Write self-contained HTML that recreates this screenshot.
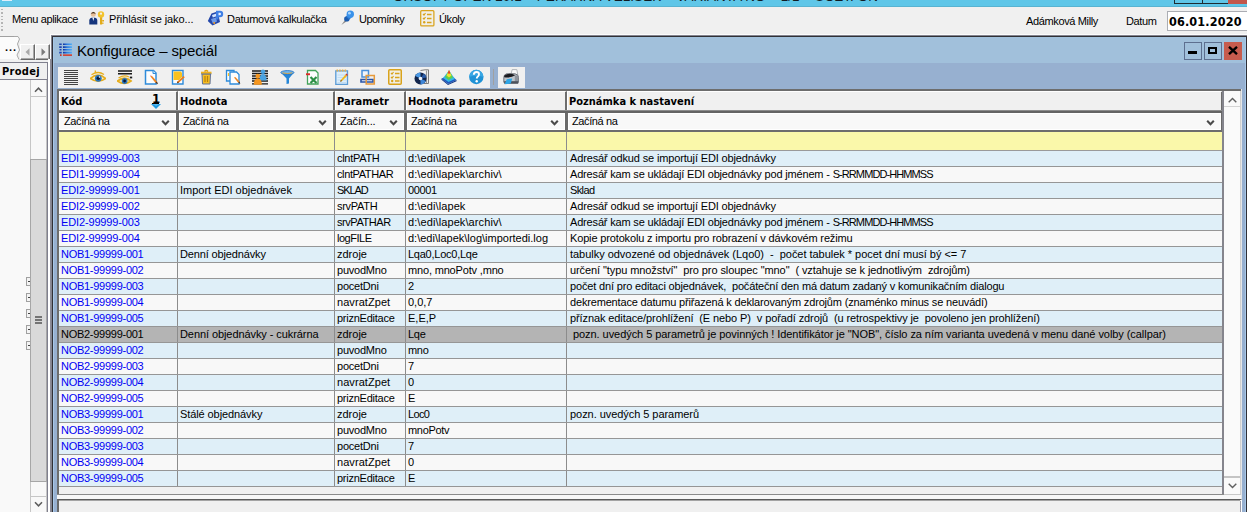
<!DOCTYPE html>
<html lang="cs"><head><meta charset="utf-8"><title>Konfigurace – speciál</title>
<style>
*{box-sizing:border-box;margin:0;padding:0}
html,body{width:1247px;height:512px;overflow:hidden;background:#f0f0f0}
body{position:relative;font-family:"Liberation Sans",sans-serif;font-size:11px;color:#000;line-height:13px}
div,span,svg{position:absolute}
.t{white-space:pre}
.b{font-weight:bold;font-family:"DejaVu Sans Condensed","Liberation Sans",sans-serif}
/* top OS title bar */
#osbar{left:0;top:0;width:1247px;height:7px;background:#5fc6e8;border-bottom:1px solid #58b3d1;overflow:hidden}
#osbar .cap{left:393px;top:-11px;font-size:13.5px;line-height:15px;letter-spacing:.04px;color:#101c24}
#osbar .wb{top:-2px;height:6px;border:1px solid #1e2a30}
/* menu bar */
.grip{left:1px;top:8px;width:2px;height:23px;background:repeating-linear-gradient(#f0f0f0 0,#f0f0f0 .7px,#b4b4b4 .7px,#b4b4b4 2.200px,#f0f0f0 2.200px,#f0f0f0 3.400px)}
.m{top:13px;font-size:11px;line-height:13px;white-space:pre}
/* MDI window */
#wb1{left:51px;top:35px;width:1196px;height:477px;background:#84848f}
#wb2{left:52px;top:36px;width:1195px;height:476px;background:#303036}
#wbg{left:53px;top:37px;width:1194px;height:475px;background:#97b0d0}
#wtitle{left:53px;top:37px;width:1194px;height:26px;background:#a1c0db}
#wcap{left:77px;top:42px;font-size:15px;line-height:18px;white-space:pre;letter-spacing:-.16px}
.wbtn{top:42px;width:18px;height:18px;border:1px solid #5d6f8f}
#tb1{left:58px;top:67px;width:432px;height:21px;background:#f0f0f0}
#tb2{left:498px;top:67px;width:27px;height:21px;background:#f0f0f0}
.ic{top:69px;width:16px;height:16px}
/* grid */
#gframe{left:57px;top:89px;width:1185px;height:406px;background:#f0f0f0;border-left:2px solid #6d6d6d;border-top:2px solid #6d6d6d}
.hc{top:91px;height:19px;background:#f0f0f0;border-top:1px solid #fff;border-left:1px solid #fff;border-right:2px solid #6d6d6d}
.ht{top:95px;font-weight:bold;white-space:pre;font-family:"DejaVu Sans Condensed","Liberation Sans",sans-serif}
.fc{top:113px;height:17px;background:#f8f8f8;border-right:3px solid #6a6a6a;box-shadow:inset 0 0 0 1px #fff}
.ft{top:115px;white-space:pre;letter-spacing:-.38px}
.yc{top:132px;height:18px;background:#faf8aa;border-right:1px solid #8c8c8c}
.hl{left:59px;width:1164px;height:2px;background:#6d6d6d}
.r{left:59px;width:1163px;height:16px;border-bottom:1px solid #969696}
.r.a{background:#dfeff8}.r.w{background:#f8f8f8}.r.sel{background:#b4b4b4}
.r.a .c0,.r.w .c0{color:#0000f4}
.c{top:0;height:15px;line-height:15px;white-space:pre;overflow:hidden;padding-left:2px;border-right:1px solid #8c8c8c}
.c0{left:0;width:119px;padding-left:2px}.c1{left:119px;width:157px}.c2{left:276px;width:71px}.c3{left:347px;width:161px}.c4{left:508px;width:655px;border-right:0;padding-left:3px}
.chev{width:9px;height:6px}
em{font-style:normal}
</style></head><body>
<!-- OS title bar (cropped) -->
<div id="osbar"><span class="t cap">ORSOFT OPEN 20.1 – PEKÁRNA VELÍŠEK – VARIANTA NO – 1/1 – ÚČET: ON</span>
<div style="left:2px;top:-7px;width:10px;height:8px;background:#4a86c8;border:1px solid #dfeefa"></div>
<div class="wb" style="left:1174px;width:29px"></div><div class="wb" style="left:1202px;width:27px"></div><div class="wb" style="left:1228px;width:20px;background:#c2574b;border-color:#c2574b"></div></div>
<!-- menu bar -->
<div class="grip"></div>
<span class="m" style="left:12px;letter-spacing:-.38px">Menu aplikace</span>
<svg style="left:89px;top:11px" width="16" height="14" viewBox="0 0 16 14"><circle cx="4.300" cy="3.300" r="2.500" fill="#e8c09a"/><path d="M1.800 2.800Q4.300-.8 6.800 2.800Q4.300 1.500 1.800 2.800Z" fill="#3a2a1c"/><path d="M.3 13.500V9.500Q.3 6.500 4.300 6.500Q8.300 6.500 8.300 9.500V13.500Z" fill="#15357c"/><path d="M3.300 6.500L4.300 10L5.300 6.500Z" fill="#fff"/><circle cx="12" cy="3.500" r="3.200" fill="#f3c32c"/><circle cx="12" cy="2.700" r="1.100" fill="#f0f0f0"/><path d="M11 6.300H13.200V13.500H11Z" fill="#e2ab1a"/><path d="M13.200 9H15V10.500H13.200ZM13.200 11.500H14.500V13H13.200Z" fill="#e2ab1a"/></svg>
<span class="m" style="left:109px;letter-spacing:-.09px">Přihlásit se jako...</span>
<svg style="left:207px;top:10px" width="17" height="16" viewBox="0 0 17 16"><path d="M4.500 3.500L10.500 1.500L13 12L5.500 15.500L.8 11Z" fill="#2347aa"/><path d="M5 5L9.500 3.500L10.300 6L5.800 7.500Z" fill="#d4e6ff"/><path d="M4 9L9 7.500L10 11.500L5.800 13.500Z" fill="#6f9ae6"/><circle cx="7.200" cy="13" r="1" fill="#f39a1f"/><path d="M9 .8H13Q16.200 .8 16.200 4Q16.200 7.200 13 7.200H11.500V9.500H9Z" fill="#3f7fe4"/><path d="M11.500 2.800H12.700Q14 2.800 14 4Q14 5.200 12.700 5.200H11.500Z" fill="#e4efff"/></svg>
<span class="m" style="left:227px;letter-spacing:-.26px">Datumová kalkulačka</span>
<svg style="left:340px;top:10px" width="16" height="16" viewBox="0 0 16 16"><path d="M1.300 15L5.300 9.800L6.700 11.200Z" fill="#8a8a8a"/><circle cx="6.800" cy="8.900" r="2.700" fill="#1d5cae"/><path d="M5.800 6.500L9.200 9.800L11.500 7.500L8.200 4.200Z" fill="#2a78d0"/><circle cx="10.300" cy="4.300" r="3.700" fill="#3a92ea"/><circle cx="9.400" cy="3.200" r="1.400" fill="#a6d4ff"/></svg>
<span class="m" style="left:359px;letter-spacing:-.54px">Upomínky</span>
<svg style="left:420px;top:10px" width="15" height="17" viewBox="0 0 15 17"><rect x=".7" y=".7" width="13.200" height="15.200" rx="1" fill="#f1efe8" stroke="#d9a31c" stroke-width="1.250"/><path d="M3 4L4 5L5.500 3M3 8L4 9L5.500 7" stroke="#d9a31c" stroke-width="1.200" fill="none"/><circle cx="4.200" cy="12.300" r="1.200" fill="#d9a31c"/><path d="M7 4.500H11.500M7 8.500H11.500M7 12.500H11.500" stroke="#d9a31c" stroke-width="1.600"/></svg>
<span class="m" style="left:439px;letter-spacing:-.4px">Úkoly</span>
<span class="m" style="left:1026px;top:15px;letter-spacing:-.36px">Adámková Milly</span>
<span class="m" style="left:1126px;top:15px;letter-spacing:-.36px">Datum</span>
<div style="left:1167px;top:11px;width:84px;height:20px;background:#fff;border:1px solid #abadb3"></div>
<span class="t b" style="left:1169px;top:13px;font-size:12.5px;line-height:17px;letter-spacing:.15px">06.01.2020</span>
<!-- left navigation panel -->
<div style="left:0;top:36px;width:18px;height:23px;background:#fbfbfb;border-top:1px solid #a0a0a0"></div>
<svg style="left:14px;top:36px" width="8" height="24" viewBox="0 0 8 24"><path d="M0 0H4L5.500 3L3.500 8L5.500 14L3 19L5 23.500H0Z" fill="#fbfbfb"/><path d="M0 .5H4L5.500 3L3.500 8L5.500 14L3 19L5 23.500" fill="none" stroke="#a8a8a8" stroke-width="1"/></svg>
<span class="t" style="left:5px;top:41px;font-size:11px;letter-spacing:1px;font-weight:bold">...</span>
<div style="left:20px;top:44px;width:15px;height:16px;background:#f0f0f0;border-right:1px solid #696969;border-bottom:1px solid #696969;border-top:1px solid #fff;border-left:1px solid #fff;box-shadow:inset -1px -1px 0 #a8a8a8"></div>
<div style="left:35px;top:44px;width:15px;height:16px;background:#f0f0f0;border-right:1px solid #696969;border-bottom:1px solid #696969;border-top:1px solid #fff;border-left:1px solid #fff;box-shadow:inset -1px -1px 0 #a8a8a8"></div>
<svg style="left:25px;top:48px" width="5" height="8" viewBox="0 0 5 8"><path d="M4.500 .3V7.700L.5 4Z" fill="#a9a9a9"/></svg>
<svg style="left:41px;top:48px" width="5" height="8" viewBox="0 0 5 8"><path d="M.5 .3V7.700L4.500 4Z" fill="#7c7c7c"/></svg>
<div style="left:0;top:62px;width:48px;height:18px;background:#f0f0f0;border-top:1px solid #80808e;border-right:1px solid #80808e;border-bottom:1px solid #80808e"></div>
<span class="t b" style="left:2px;top:65px;font-size:11px;letter-spacing:.3px">Prodej</span>
<div style="left:0;top:80px;width:30px;height:432px;background:#f9f9f9"></div>
<div style="left:30px;top:80px;width:17px;height:432px;background:#f8f8f8;border-left:1px solid #c6c6c6;border-right:1px solid #c6c6c6"></div>
<div style="left:31px;top:96px;width:15px;height:1px;background:#c6c6c6"></div>
<div style="left:30px;top:159px;width:17px;height:323px;background:#d9d9d9;border:1px solid #a6a6a6"></div>
<div style="left:31px;top:496px;width:15px;height:1px;background:#c6c6c6"></div>
<svg style="left:34px;top:86px" width="9" height="7" viewBox="0 0 9 7"><path d="M1 5.800L4.500 2.200L8 5.800" fill="none" stroke="#5c5c5c" stroke-width="1.500"/></svg>
<svg style="left:34px;top:501px" width="9" height="7" viewBox="0 0 9 7"><path d="M1 1.200L4.500 4.800L8 1.200" fill="none" stroke="#5c5c5c" stroke-width="1.500"/></svg>
<div style="left:35px;top:316px;width:7px;height:2px;background:#747474;box-shadow:0 3px 0 #747474,0 6px 0 #747474"></div>
<!-- tree expanders peeking out -->
<div style="left:26px;top:277px;width:4px;height:9px;border:1px solid #a0a0a0;border-right:0;background:#f4f4f4"></div><div style="left:28px;top:281px;width:2px;height:1px;background:#444"></div>
<div style="left:26px;top:293px;width:4px;height:9px;border:1px solid #a0a0a0;border-right:0;background:#f4f4f4"></div><div style="left:28px;top:297px;width:2px;height:1px;background:#444"></div>
<div style="left:26px;top:309px;width:4px;height:9px;border:1px solid #a0a0a0;border-right:0;background:#f4f4f4"></div><div style="left:28px;top:313px;width:2px;height:1px;background:#444"></div>
<div style="left:26px;top:325px;width:4px;height:9px;border:1px solid #a0a0a0;border-right:0;background:#f4f4f4"></div><div style="left:28px;top:329px;width:2px;height:1px;background:#444"></div>
<div style="left:26px;top:341px;width:4px;height:9px;border:1px solid #a0a0a0;border-right:0;background:#f4f4f4"></div><div style="left:28px;top:345px;width:2px;height:1px;background:#444"></div>
<div style="left:47px;top:62px;width:1px;height:450px;background:#80808e"></div><div style="left:48px;top:59px;width:2px;height:453px;background:#fff"></div><div style="left:50px;top:59px;width:1px;height:453px;background:#8a8a96"></div>
<div style="left:50px;top:34px;width:1px;height:25px;background:#fcfcfc"></div>
<div style="left:50px;top:34px;width:1197px;height:1px;background:#fcfcfc"></div>
<!-- MDI child window -->
<div id="wb1"></div><div id="wb2"></div><div id="wbg"></div><div id="wtitle"></div><div style="left:53px;top:37px;width:1px;height:475px;background:#a8c8e8"></div>
<svg style="left:59px;top:43px" width="13" height="13" viewBox="0 0 13 13"><defs><linearGradient id="tg" x1="0" x2="1" y1="0" y2="0"><stop offset="0" stop-color="#0a2fa0"/><stop offset=".45" stop-color="#2f7fe0"/><stop offset="1" stop-color="#55aef4"/></linearGradient></defs><path d="M4 .4H13V2.100H4ZM4 3.200H13V4.900H4ZM4 6H13V7.600H4ZM4 8.700H13V10.400H4Z" fill="url(#tg)"/><path d="M4 11.300H13V13H4Z" fill="#cf4638"/><path d="M.2 .4H2.700V2.100H.2ZM.2 3.200H2.700V4.900H.2ZM.6 6H2.500V7.600H.6ZM.2 8.700H2.700V10.400H.2Z" fill="#1c44b0"/><path d="M1 11.300H2.600V13H1Z" fill="#c0392e"/></svg>
<span id="wcap">Konfigurace – speciál</span>
<div class="wbtn" style="left:1184px"></div><div style="left:1188px;top:51px;width:9px;height:3px;background:#000"></div>
<div class="wbtn" style="left:1204px"></div><div style="left:1208px;top:47px;width:9px;height:7px;border:2px solid #000"></div>
<div class="wbtn" style="left:1224px;background:#c75c4e;border-color:#c75c4e"></div>
<svg style="left:1228px;top:46px" width="10" height="9" viewBox="0 0 10 9"><path d="M1 .8L9 8.200M9 .8L1 8.200" stroke="#000" stroke-width="2.300"/></svg>
<div id="tb1"></div><div id="tb2"></div>
<div style="left:493px;top:69px;width:1px;height:16px;background:#a0a0a0"></div>
<!-- toolbar icons -->
<svg class="ic" style="left:63px" viewBox="0 0 16 16"><path d="M1 1.500H15M1 3.500H15M1 5.500H15M1 7.500H15M1 9.500H15M1 11.500H15M1 13.500H15M1 15.500H15" stroke="#303030" stroke-width=".9"/></svg>
<svg class="ic" style="left:90px;top:70px" viewBox="0 0 16 16"><path d="M.3 8.500Q8 1.800 15.700 8.500Q8 14 .3 8.500Z" fill="#fdf0c0" stroke="#e6ae1e" stroke-width="1.700"/><path d="M1.500 4.800Q8 .3 14 4.500M5 .5L6 3" fill="none" stroke="#e6ae1e" stroke-width="1.300"/><circle cx="8.300" cy="8.300" r="3.400" fill="#2a74bc"/><circle cx="8.300" cy="8.300" r="1.700" fill="#0a1830"/><circle cx="9.500" cy="7" r=".8" fill="#fff"/></svg>
<svg class="ic" style="left:117px;top:70px" viewBox="0 0 16 16"><path d="M1 1H15M1 3.800H15" stroke="#1a1a1a" stroke-width="1.600"/><path d="M12.800 7.500H15.200" stroke="#1a1a1a" stroke-width="1.800"/><path d="M.5 11Q7.500 5.500 14 11Q7.500 15.800 .5 11Z" fill="#fdf0c0" stroke="#e6ae1e" stroke-width="1.700"/><path d="M1.500 8Q7 4.500 12 7" fill="none" stroke="#e6ae1e" stroke-width="1.300"/><circle cx="7.600" cy="11" r="2.900" fill="#2a74bc"/><circle cx="7.600" cy="11" r="1.400" fill="#0a1830"/></svg>
<svg class="ic" style="left:143px" viewBox="0 0 16 16"><path d="M2.500 1.500H10.500L13 4V15H2.500Z" fill="#fdfdfd" stroke="#2e8bda" stroke-width="1.500"/><path d="M10 1.500V4.500H13" fill="#cfe6fb" stroke="#2e8bda" stroke-width="1"/><path d="M7.500 7.500L9 7L14 12.500L12.500 14Z" fill="#ee8420"/><path d="M12.500 14L14 12.500L15 15.200Z" fill="#4a2a10"/><path d="M7.500 7.500L9 7L7.200 6.500Z" fill="#c33"/></svg>
<svg class="ic" style="left:170px" viewBox="0 0 16 16"><path d="M2.500 1.500H13V15H2.500Z" fill="#fdfdfd" stroke="#2e8bda" stroke-width="1.400"/><path d="M3.500 2.500H11L12 4V8L9 11H3.500Z" fill="#f9c11f"/><path d="M13.500 7L14.800 8.300L9 13.500L7 14.200L7.700 12.200Z" fill="#ee7c1c"/><path d="M7 14.200L7.700 12.200L9 13.500Z" fill="#5a3010"/></svg>
<svg class="ic" style="left:198px" viewBox="0 0 16 16"><path d="M4 5H12.500L12 15H4.500Z" fill="#f7bd22" stroke="#60739a" stroke-width="1"/><path d="M3 3.800H13.500" stroke="#f0b21c" stroke-width="2.200"/><path d="M3 4.900H13.500" stroke="#60739a" stroke-width=".8"/><path d="M6.500 2.500Q8.200 .6 10 2.500" fill="none" stroke="#e0a010" stroke-width="1.400"/><path d="M7 7V13M9.500 7V13" stroke="#b98208" stroke-width="1.200"/></svg>
<svg class="ic" style="left:225px" viewBox="0 0 16 16"><path d="M1.500 1.500H9V12H1.500Z" fill="#fdfdfd" stroke="#2e8bda" stroke-width="1.300"/><path d="M3.500 4V7" stroke="#f9c11f" stroke-width="1.200"/><path d="M5 3H11.500L14 5.500V15H5Z" fill="#fdfdfd" stroke="#2e8bda" stroke-width="1.300"/><path d="M9 8.500L10.300 8L14.500 12.500L13.200 13.800Z" fill="#ee8420"/><path d="M13.200 13.800L14.500 12.500L15.300 15Z" fill="#4a2a10"/></svg>
<svg class="ic" style="left:252px" viewBox="0 0 16 16"><path d="M0 2H16M0 4.500H16M0 7H16M0 9.500H16M0 12H16M0 14.800H16" stroke="#1a1a1a" stroke-width="1.300"/><circle cx="11" cy="2.800" r="2.300" fill="#4aa3e2"/><path d="M7.500 11.500Q7.500 5 11 5Q14.500 5 14.500 11.500Z" fill="#4aa3e2"/><circle cx="5.800" cy="7" r="2.300" fill="#f5961f"/><path d="M1.800 15.800Q1.800 9.300 5.800 9.300Q9.800 9.300 9.800 15.800Z" fill="#f5961f"/></svg>
<svg class="ic" style="left:279px" viewBox="0 0 16 16"><path d="M1.800 3.500Q8.500 6.500 15 3.500L10 9.500V14.500L7.500 15V9.500Z" fill="#2486d8"/><ellipse cx="8.400" cy="3.500" rx="6.600" ry="1.900" fill="#6fb6f0" stroke="#1e6fc0" stroke-width=".8"/><path d="M3.500 3.800Q8.400 5.300 13.300 3.800" fill="none" stroke="#e0a030" stroke-width=".9"/></svg>
<svg class="ic" style="left:305px" viewBox="0 0 16 16"><path d="M2.500 1.500H10.500L13 4V15H2.500Z" fill="#fdfdfd" stroke="#43a35a" stroke-width="1.300"/><path d="M1 4.300H5V6.200H1Z" fill="#dc2a26"/><path d="M5.500 8L11.500 14M11.500 8L5.500 14" stroke="#2c8f45" stroke-width="2.200"/></svg>
<svg class="ic" style="left:334px" viewBox="0 0 16 16"><path d="M1.800 1.800H13.500V15.300H1.800Z" fill="#ddeefb" stroke="#5b9bd5" stroke-width="1.300"/><path d="M2.500 1.500H13" stroke="#e8b04a" stroke-width="1.800" stroke-dasharray="1.500 1.200"/><path d="M3.500 6H12M3.500 8.500H12M3.500 11H12M3.500 13.500H12" stroke="#bcd8f0" stroke-width=".8"/><path d="M11.500 5.500L13 7L8 12L6.300 12.700L6.800 11Z" fill="#f2b81e"/><path d="M11.500 5.500L13 7L14 6L12.500 4.500Z" fill="#d23b2f"/><path d="M6.300 12.700L6.800 11L8 12Z" fill="#4a2a10"/></svg>
<svg class="ic" style="left:360px" viewBox="0 0 16 16"><path d="M2 1.500H8.500V8H2Z" fill="#f0f4fb" stroke="#4a90dc" stroke-width="1.500"/><path d="M1 10.500H13V13H1Z" fill="#e8eefb" stroke="#2b55a8" stroke-width="1.600"/><path d="M6.200 6.500H14.300V15H6.200Z" fill="none" stroke="#e79a3c" stroke-width="1.500"/></svg>
<svg class="ic" style="left:387px" viewBox="0 0 16 16"><rect x="1.750" y=".75" width="12.500" height="14.500" rx="1" fill="#f1efe6" stroke="#d9a31c" stroke-width="1.500"/><path d="M4 4L5 5L6.500 3M4 8L5 9L6.500 7" stroke="#d9a31c" stroke-width="1.200" fill="none"/><circle cx="5.200" cy="12" r="1.200" fill="#d9a31c"/><path d="M8 4.500H12.500M8 8.500H12.500M8 12H12.500" stroke="#d9a31c" stroke-width="1.600"/></svg>
<svg class="ic" style="left:414px" viewBox="0 0 16 16"><path d="M6.500 1.500L11 .8H14.500V14.500H10" fill="#f4f4f4" stroke="#707070" stroke-width=".9"/><path d="M12.500 1.500V14" stroke="#9a9a9a" stroke-width="1.200"/><circle cx="6.500" cy="9.500" r="6" fill="#13264d"/><path d="M6.500 9.500L1.200 7Q2.800 3.800 6.500 3.500Z" fill="#4c9ae6"/><path d="M6.500 9.500L11.800 12Q10.200 15.200 6.500 15.500Z" fill="#3f86d8"/><path d="M6.500 9.500L10 4.500Q12 6 12.500 8.500Z" fill="#2a5ca8"/><circle cx="6.500" cy="9.500" r="1.800" fill="#eef2f8"/></svg>
<svg class="ic" style="left:441px" viewBox="0 0 16 16"><path d="M.5 9.500L7 15L15.500 11L10 6Z" fill="#1e58c0"/><path d="M.5 9.500V10.800L7 16L15.500 12.300V11L7 15Z" fill="#123a86"/><path d="M2 9L8 1.500L14 10L7.500 13Z" fill="#35b6e8"/><path d="M4 8L8 1.500L12 8.500L7.500 11Z" fill="#5fd04a"/><path d="M5.500 6.500L8 1.500L10.500 6.500L8 8.500Z" fill="#f0e030"/><path d="M6.800 4L8 .8L9.300 4L8 5Z" fill="#e8402a"/></svg>
<svg class="ic" style="left:468px" viewBox="0 0 16 16"><circle cx="8.300" cy="8" r="7.200" fill="#1f92d6"/><path d="M1.100 8A7.200 7.200 0 0 1 15.500 8Q8.300 5.500 1.100 8Z" fill="#38a6e4"/><path d="M5.800 5.800Q5.800 3 8.500 3Q11 3 11 5.300Q11 6.800 9.600 7.700Q8.800 8.200 8.800 9.500" fill="none" stroke="#fff" stroke-width="1.900"/><circle cx="8.700" cy="12.300" r="1.200" fill="#fff"/></svg>
<svg class="ic" style="left:503px" viewBox="0 0 16 16"><path d="M8 5L9.200 .6H13.800L14.800 5.500Z" fill="#f8f8f8" stroke="#a0a4aa" stroke-width=".8"/><path d="M.8 8.500Q.8 5.500 3.500 4.800L12 4.800Q15.600 5.500 15.600 8.500V13.300H.8Z" fill="#bfc4ca" stroke="#565a62" stroke-width=".8"/><path d="M1.200 6.800Q5.500 3.200 12.300 6.300Q8 9.200 1.200 8.200Z" fill="#1c1c20"/><path d="M11.800 6.500H15.200V13H11.800Z" fill="#8e949c"/><path d="M1.200 12.200H15.200V14.800H1.200Z" fill="#4e525a"/><path d="M3.800 10.200L9.200 9.600L7.800 14.600L1.600 15.200Z" fill="#2ea6e6"/></svg>
<!-- grid -->
<div id="gframe"></div>
<div class="hc" style="left:59px;width:119px"></div>
<div class="hc" style="left:178px;width:157px"></div>
<div class="hc" style="left:335px;width:71px"></div>
<div class="hc" style="left:406px;width:161px"></div>
<div class="hc" style="left:567px;width:656px"></div>
<span class="ht" style="left:61px">Kód</span>
<span class="ht" style="left:180px">Hodnota</span>
<span class="ht" style="left:337px">Parametr</span>
<span class="ht" style="left:408px">Hodnota parametru</span>
<span class="ht" style="left:569px">Poznámka k nastavení</span>
<span class="t b" style="left:152px;top:92px;font-size:13px;line-height:13px">1</span>
<div style="left:152px;top:103px;width:7px;height:1px;background:#000"></div>
<svg style="left:151px;top:104px" width="10" height="5" viewBox="0 0 10 5"><path d="M0 0H10L5 5Z" fill="#1f98e0"/><path d="M1.500 0H8.500L5 2Z" fill="#55b8f2"/></svg>
<div class="hl" style="top:110px;height:3px;background:#646464;border-top:1px solid #8c8c8c"></div>
<div class="fc" style="left:59px;width:120px"></div>
<div class="fc" style="left:179px;width:157px"></div>
<div class="fc" style="left:336px;width:71px"></div>
<div class="fc" style="left:407px;width:161px"></div>
<div class="fc" style="left:568px;width:656px"></div>
<span class="ft" style="left:64px">Začíná na</span>
<span class="ft" style="left:183px">Začíná na</span>
<span class="ft" style="left:340px;letter-spacing:-.15px">Začín...</span>
<span class="ft" style="left:411px">Začíná na</span>
<span class="ft" style="left:572px">Začíná na</span>
<svg class="chev" style="left:161px;top:120px" viewBox="0 0 9 6"><path d="M1.200 .7L4.500 4.300L7.800 .7" fill="none" stroke="#4a4a4a" stroke-width="2"/></svg>
<svg class="chev" style="left:318px;top:120px" viewBox="0 0 9 6"><path d="M1.200 .7L4.500 4.300L7.800 .7" fill="none" stroke="#4a4a4a" stroke-width="2"/></svg>
<svg class="chev" style="left:389px;top:120px" viewBox="0 0 9 6"><path d="M1.200 .7L4.500 4.300L7.800 .7" fill="none" stroke="#4a4a4a" stroke-width="2"/></svg>
<svg class="chev" style="left:550px;top:120px" viewBox="0 0 9 6"><path d="M1.200 .7L4.500 4.300L7.800 .7" fill="none" stroke="#4a4a4a" stroke-width="2"/></svg>
<svg class="chev" style="left:1206px;top:120px" viewBox="0 0 9 6"><path d="M1.200 .7L4.500 4.300L7.800 .7" fill="none" stroke="#4a4a4a" stroke-width="2"/></svg>
<div class="hl" style="top:130px"></div>
<div class="yc" style="left:59px;width:119px"></div>
<div class="yc" style="left:178px;width:157px"></div>
<div class="yc" style="left:335px;width:71px"></div>
<div class="yc" style="left:406px;width:161px"></div>
<div class="yc" style="left:567px;width:655px;border-right:0"></div>
<div style="left:59px;top:150px;width:1163px;height:1px;background:#9a9a9a"></div>
<div style="left:1222px;top:91px;width:2px;height:403px;background:#85858d"></div>
<div class="r a" style="top:151px"><span class="c c0" style="letter-spacing:-.14px">EDI1-99999-003</span><span class="c c1"></span><span class="c c2" style="letter-spacing:-.29px">clntPATH</span><span class="c c3" style="letter-spacing:.10px">d:\edi\lapek</span><span class="c c4" style="letter-spacing:-.14px">Adresář odkud se importují EDI objednávky</span></div>
<div class="r w" style="top:167px"><span class="c c0" style="letter-spacing:-.14px">EDI1-99999-004</span><span class="c c1"></span><span class="c c2" style="letter-spacing:-.39px">clntPATHAR</span><span class="c c3" style="letter-spacing:.10px">d:\edi\lapek\archiv\</span><span class="c c4" style="letter-spacing:-.17px">Adresář kam se ukládají EDI objednávky pod jménem - <em style="letter-spacing:-.91px">S-RRMMDD-HHMMSS</em></span></div>
<div class="r a" style="top:183px"><span class="c c0" style="letter-spacing:-.14px">EDI2-99999-001</span><span class="c c1">Import EDI objednávek</span><span class="c c2" style="letter-spacing:-1.10px">SKLAD</span><span class="c c3" style="letter-spacing:-.38px">00001</span><span class="c c4" style="letter-spacing:-.61px">Sklad</span></div>
<div class="r w" style="top:199px"><span class="c c0" style="letter-spacing:-.14px">EDI2-99999-002</span><span class="c c1"></span><span class="c c2" style="letter-spacing:-.27px">srvPATH</span><span class="c c3" style="letter-spacing:.10px">d:\edi\lapek</span><span class="c c4" style="letter-spacing:-.14px">Adresář odkud se importují EDI objednávky</span></div>
<div class="r a" style="top:215px"><span class="c c0" style="letter-spacing:-.14px">EDI2-99999-003</span><span class="c c1"></span><span class="c c2" style="letter-spacing:-.44px">srvPATHAR</span><span class="c c3" style="letter-spacing:.10px">d:\edi\lapek\archiv\</span><span class="c c4" style="letter-spacing:-.17px">Adresář kam se ukládají EDI objednávky pod jménem - <em style="letter-spacing:-.91px">S-RRMMDD-HHMMSS</em></span></div>
<div class="r w" style="top:231px"><span class="c c0" style="letter-spacing:-.14px">EDI2-99999-004</span><span class="c c1"></span><span class="c c2" style="letter-spacing:-.49px">logFILE</span><span class="c c3">d:\edi\lapek\log\importedi.log</span><span class="c c4" style="letter-spacing:-.15px">Kopie protokolu z importu pro robrazení v dávkovém režimu</span></div>
<div class="r a" style="top:247px"><span class="c c0" style="letter-spacing:-.27px">NOB1-99999-001</span><span class="c c1" style="letter-spacing:-.14px">Denní objednávky</span><span class="c c2">zdroje</span><span class="c c3" style="letter-spacing:-.25px">Lqa0,Loc0,Lqe</span><span class="c c4" style="letter-spacing:-.03px">tabulky odvozené od objednávek (Lqo0)  -  počet tabulek * pocet dní musí bý &lt;= 7</span></div>
<div class="r w" style="top:263px"><span class="c c0" style="letter-spacing:-.27px">NOB1-99999-002</span><span class="c c1"></span><span class="c c2" style="letter-spacing:-.23px">puvodMno</span><span class="c c3" style="letter-spacing:-.17px">mno, mnoPotv ,mno</span><span class="c c4" style="letter-spacing:-.09px">určení "typu množství"  pro pro sloupec "mno"  ( vztahuje se k jednotlivým  zdrojům)</span></div>
<div class="r a" style="top:279px"><span class="c c0" style="letter-spacing:-.27px">NOB1-99999-003</span><span class="c c1"></span><span class="c c2" style="letter-spacing:-.22px">pocetDni</span><span class="c c3">2</span><span class="c c4" style="letter-spacing:-.16px">počet dní pro editaci objednávek,  počáteční den má datum zadaný v komunikačním dialogu</span></div>
<div class="r w" style="top:295px"><span class="c c0" style="letter-spacing:-.27px">NOB1-99999-004</span><span class="c c1"></span><span class="c c2" style="letter-spacing:.06px">navratZpet</span><span class="c c3">0,0,7</span><span class="c c4" style="letter-spacing:-.17px">dekrementace datumu přiřazená k deklarovaným zdrojům (znaménko minus se neuvádí)</span></div>
<div class="r a" style="top:311px"><span class="c c0" style="letter-spacing:-.27px">NOB1-99999-005</span><span class="c c1"></span><span class="c c2" style="letter-spacing:-.25px">priznEditace</span><span class="c c3">E,E,P</span><span class="c c4" style="letter-spacing:-.10px">příznak editace/prohlížení  (E nebo P)  v pořadí zdrojů  (u retrospektivy je  povoleno jen prohlížení)</span></div>
<div class="r sel" style="top:327px"><span class="c c0" style="letter-spacing:-.27px">NOB2-99999-001</span><span class="c c1" style="letter-spacing:-.08px">Denní objednávky - cukrárna</span><span class="c c2">zdroje</span><span class="c c3" style="letter-spacing:-.29px">Lqe</span><span class="c c4" style="letter-spacing:-.06px"> pozn. uvedých 5 parametrů je povinných ! Identifikátor je "NOB", číslo za ním varianta uvedená v menu dané volby (callpar)</span></div>
<div class="r a" style="top:343px"><span class="c c0" style="letter-spacing:-.27px">NOB2-99999-002</span><span class="c c1"></span><span class="c c2" style="letter-spacing:-.23px">puvodMno</span><span class="c c3" style="letter-spacing:-.30px">mno</span><span class="c c4"></span></div>
<div class="r w" style="top:359px"><span class="c c0" style="letter-spacing:-.27px">NOB2-99999-003</span><span class="c c1"></span><span class="c c2" style="letter-spacing:-.22px">pocetDni</span><span class="c c3">7</span><span class="c c4"></span></div>
<div class="r a" style="top:375px"><span class="c c0" style="letter-spacing:-.27px">NOB2-99999-004</span><span class="c c1"></span><span class="c c2" style="letter-spacing:.06px">navratZpet</span><span class="c c3">0</span><span class="c c4"></span></div>
<div class="r w" style="top:391px"><span class="c c0" style="letter-spacing:-.27px">NOB2-99999-005</span><span class="c c1"></span><span class="c c2" style="letter-spacing:-.25px">priznEditace</span><span class="c c3">E</span><span class="c c4"></span></div>
<div class="r a" style="top:407px"><span class="c c0" style="letter-spacing:-.27px">NOB3-99999-001</span><span class="c c1" style="letter-spacing:-.09px">Stálé objednávky</span><span class="c c2">zdroje</span><span class="c c3" style="letter-spacing:-.66px">Loc0</span><span class="c c4" style="letter-spacing:-.05px">pozn. uvedých 5 paramerů</span></div>
<div class="r w" style="top:423px"><span class="c c0" style="letter-spacing:-.27px">NOB3-99999-002</span><span class="c c1"></span><span class="c c2" style="letter-spacing:-.23px">puvodMno</span><span class="c c3" style="letter-spacing:-.32px">mnoPotv</span><span class="c c4"></span></div>
<div class="r a" style="top:439px"><span class="c c0" style="letter-spacing:-.27px">NOB3-99999-003</span><span class="c c1"></span><span class="c c2" style="letter-spacing:-.22px">pocetDni</span><span class="c c3">7</span><span class="c c4"></span></div>
<div class="r w" style="top:455px"><span class="c c0" style="letter-spacing:-.27px">NOB3-99999-004</span><span class="c c1"></span><span class="c c2" style="letter-spacing:.06px">navratZpet</span><span class="c c3">0</span><span class="c c4"></span></div>
<div class="r a" style="top:471px"><span class="c c0" style="letter-spacing:-.27px">NOB3-99999-005</span><span class="c c1"></span><span class="c c2" style="letter-spacing:-.25px">priznEditace</span><span class="c c3">E</span><span class="c c4"></span></div>
<!-- below rows -->
<div style="left:57px;top:494px;width:1167px;height:1px;background:#8a8a8a"></div>
<div style="left:57px;top:495px;width:1185px;height:4px;background:#f7f7f7"></div>
<div style="left:57px;top:499px;width:1185px;height:13px;background:#f0f0f0;border-top:1px solid #5a5a5a;border-left:2px solid #696969;border-right:1px solid #fff"></div><div style="left:59px;top:500px;width:1181px;height:1px;background:#a4a4a4"></div><div style="left:1240px;top:501px;width:1px;height:11px;background:#9a9aa6"></div>
<!-- grid vertical scrollbar -->
<div style="left:1224px;top:91px;width:17px;height:404px;background:#fafafa;border-right:1px solid #d0d0d0"></div>
<div style="left:1224px;top:106px;width:16px;height:1px;background:#d4d4d4"></div>
<div style="left:1224px;top:476px;width:16px;height:2px;background:#c4c4c4"></div><div style="left:1224px;top:494px;width:17px;height:1px;background:#c8c8c8"></div>
<svg style="left:1228px;top:97px" width="9" height="6" viewBox="0 0 9 6"><path d="M.7 5.300L4.500 1.500L8.300 5.300" fill="none" stroke="#606060" stroke-width="1.400"/></svg>
<svg style="left:1228px;top:483px" width="9" height="6" viewBox="0 0 9 6"><path d="M.7 .7L4.500 4.500L8.300 .7" fill="none" stroke="#606060" stroke-width="1.400"/></svg>
<div style="left:1241px;top:89px;width:1px;height:410px;background:#e8e8e8"></div>
<div style="left:1245px;top:37px;width:1px;height:475px;background:#a8c8e8"></div><div style="left:1246px;top:36px;width:1px;height:476px;background:#303036"></div>
</body></html>
